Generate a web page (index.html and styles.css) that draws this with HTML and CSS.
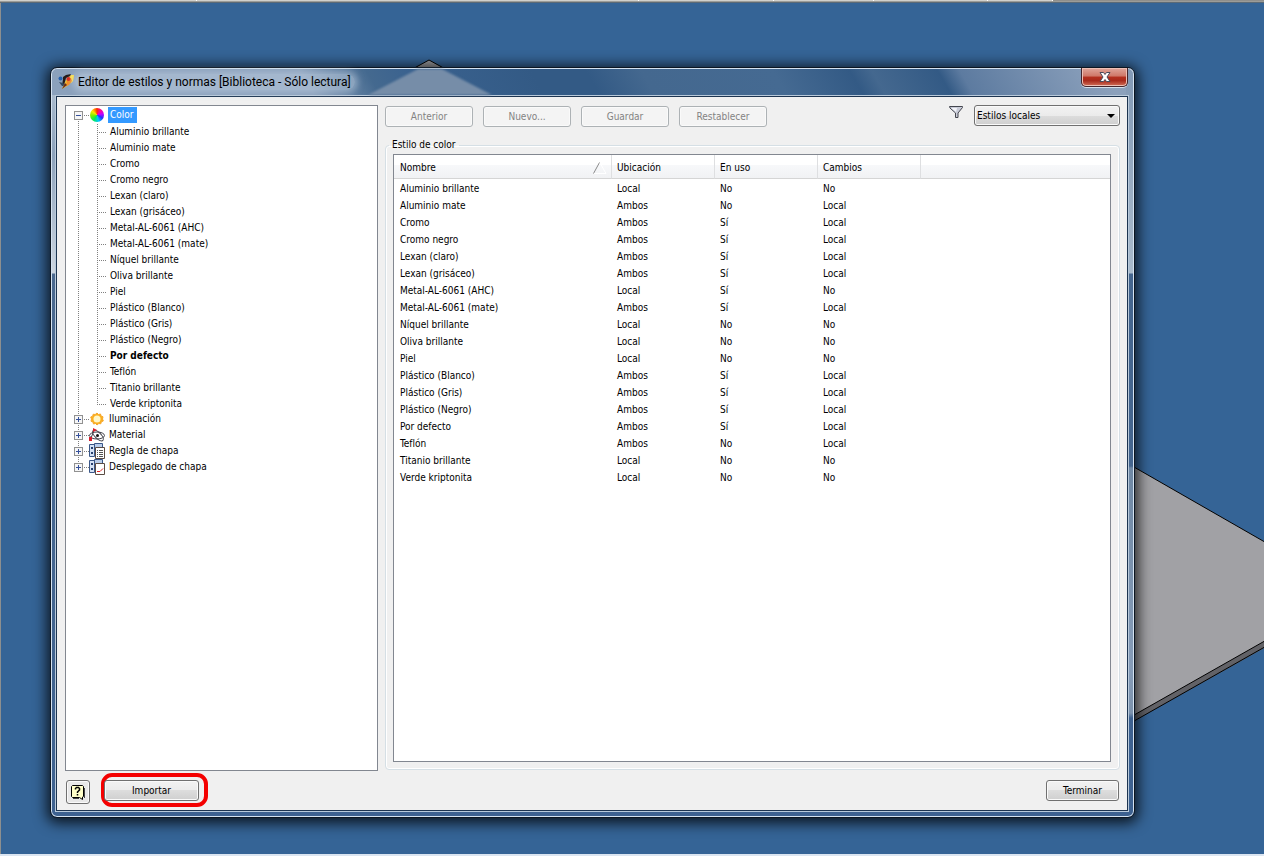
FILE: index.html
```html
<!DOCTYPE html>
<html lang="es">
<head>
<meta charset="utf-8">
<title>Editor de estilos y normas</title>
<link rel="stylesheet" href="styles.css">
</head>
<body>
<div class="topstrip"><i class="tab tab-a"></i><i class="tab tab-b"></i><i class="tab tab-f"></i><i class="tab tab-c"></i><i class="tab tab-d"></i><i class="tab tab-e"></i></div>
<main class="desktop">
  <svg class="scene" width="1264" height="852" viewBox="0 3 1264 852" aria-hidden="true">
    <path d="M429 60 L409 71 H449Z" fill="#999a9e" stroke="#000"/>
    <path d="M1120 459 L1270 545 V645 L1120 729Z" fill="#626267"/>
    <path d="M1120 459 L1270 545 V638 L1120 723Z" fill="#a1a1a5" stroke="#000"/>
    <path d="M1120 729 L1270 644" fill="none" stroke="#000"/>
  </svg>
  <section class="window" aria-label="Editor de estilos y normas">
    <header class="titlebar">
      <svg class="peak" width="140" height="26" viewBox="0 0 140 26" aria-hidden="true"><path d="M58 0H82L132 26H8Z" fill="#768da8"/></svg>
      <svg class="appicon" width="16" height="16" viewBox="0 0 16 16" aria-hidden="true">
        <path d="M4 15 L8 6 13 1 16 1 15 7 9 12Z" fill="#f3c22f"/>
        <path d="M13 1h3l-1 6-2 2-1-5z" fill="#ffe14a"/>
        <path d="M9 5l4-1 1 3-3 4-3 1z" fill="#f08a24"/>
        <path d="M5 3l3-2 5-1-1 2-4 2-2 7-2 1 1-7z" fill="#241a1a"/>
        <circle cx="2.500" cy="4.500" r="2" fill="#2361b0"/>
        <circle cx="10.500" cy="5" r="2" fill="#d8281e"/>
        <path d="M1 8l4 1 2 2-3 1z" fill="#34495f"/>
        <path d="M4 15l3-6 2 2z" fill="#6b2b18"/>
      </svg>
      <h1 class="title">Editor de estilos y normas [Biblioteca - Sólo lectura]</h1>
      <button class="close" type="button" aria-label="Cerrar">
        <svg width="12" height="10" viewBox="0 0 12 10" aria-hidden="true"><path d="M1 .5h3.500L6 2.500 7.500.5H11L8 5l3 4.500H7.500L6 7.500 4.500 9.500H1L4 5z" fill="#fff" stroke="#4a4a5a"/></svg>
      </button>
    </header>
    <div class="client">
      <div class="panes">
        <nav class="tree" aria-label="Estilos">
          <ul class="roots">
            <li class="root">
              <div class="node"><button class="toggle" type="button" aria-label="Contraer Color"></button><span class="dots"></span><span class="wheel"></span><a class="label selected" href="#">Color</a></div>
              <ul class="leaves">
                <li class="leaf">Aluminio brillante</li><li class="leaf">Aluminio mate</li><li class="leaf">Cromo</li><li class="leaf">Cromo negro</li><li class="leaf">Lexan (claro)</li><li class="leaf">Lexan (grisáceo)</li><li class="leaf">Metal-AL-6061 (AHC)</li><li class="leaf">Metal-AL-6061 (mate)</li><li class="leaf">Níquel brillante</li><li class="leaf">Oliva brillante</li><li class="leaf">Piel</li><li class="leaf">Plástico (Blanco)</li><li class="leaf">Plástico (Gris)</li><li class="leaf">Plástico (Negro)</li><li class="leaf current">Por defecto</li><li class="leaf">Teflón</li><li class="leaf">Titanio brillante</li><li class="leaf">Verde kriptonita</li>
              </ul>
            </li>
            <li class="root">
              <div class="node"><button class="toggle plus" type="button" aria-label="Expandir Iluminación"></button><span class="dots"></span>
                <svg class="icon" width="16" height="16" viewBox="0 0 16 16" aria-hidden="true"><path d="M8 2l1.500 1.500L11.500 3l.5 2 2 .8L13.500 8l.8 2-2 .8-.5 2-2-.3L8 14l-1.500-1.500-2 .5-.5-2-2-.8L2.500 8l-.8-2 2-.8.5-2 2 .3z" fill="#fbb01e" stroke="#f6a62a"/><circle cx="8" cy="8" r="3.500" fill="#fff6c8"/></svg>
                <a class="label" href="#">Iluminación</a></div>
            </li>
            <li class="root">
              <div class="node"><button class="toggle plus" type="button" aria-label="Expandir Material"></button><span class="dots"></span>
                <svg class="icon" width="16" height="16" viewBox="0 0 16 16" aria-hidden="true"><g fill="none" stroke="#44444c"><ellipse cx="8" cy="8.500" rx="7.500" ry="3.500"/><ellipse cx="9" cy="8.500" rx="7" ry="3" transform="rotate(45 9 8.500)"/><path d="M5 3.500L2 11"/></g><circle cx="8.500" cy="8.500" r="1.500" fill="#111"/><path d="M4 1l4 2-4 2zM0 10h3v4H0z" fill="#d81e2c"/></svg>
                <a class="label" href="#">Material</a></div>
            </li>
            <li class="root">
              <div class="node"><button class="toggle plus" type="button" aria-label="Expandir Regla de chapa"></button><span class="dots"></span>
                <svg class="icon" width="16" height="16" viewBox="0 0 16 16" aria-hidden="true"><path d="M.5 1.500h5v12h-5z" fill="#d5e2f5" stroke="#3a5788"/><path d="M2 4h2v2H2zM2 9h2v2H2z" fill="#26406e"/><path d="M5.500.5h8v11h-8z" fill="#b9cdea" stroke="#3a5788"/><path d="M6.500 4.500h9v11h-9z" fill="#fff" stroke="#5b4c44"/><path d="M8 7.500h1m1 0h4M8 9.500h1m1 0h4M8 11.500h1m1 0h4M8 13.500h1m1 0h4" stroke="#555"/></svg>
                <a class="label" href="#">Regla de chapa</a></div>
            </li>
            <li class="root">
              <div class="node"><button class="toggle plus" type="button" aria-label="Expandir Desplegado de chapa"></button><span class="dots"></span>
                <svg class="icon" width="16" height="16" viewBox="0 0 16 16" aria-hidden="true"><path d="M.5 1.500h5v12h-5z" fill="#d5e2f5" stroke="#3a5788"/><path d="M2 4h2v2H2zM2 9h2v2H2z" fill="#26406e"/><path d="M5.500.5h8v11h-8z" fill="#b9cdea" stroke="#3a5788"/><path d="M6.500 4.500h9v11h-9z" fill="#fff" stroke="#5b4c44"/><path d="M8 12.500h3l3-3" fill="none" stroke="#d22"/></svg>
                <a class="label" href="#">Desplegado de chapa</a></div>
            </li>
          </ul>
        </nav>
        <div class="detail">
          <div class="toolbar">
            <button class="btn" type="button" disabled>Anterior</button>
            <button class="btn" type="button" disabled>Nuevo...</button>
            <button class="btn" type="button" disabled>Guardar</button>
            <button class="btn" type="button" disabled>Restablecer</button>
            <svg class="funnel" width="16" height="16" viewBox="0 0 16 16" aria-hidden="true"><path d="M1.500 2.500h13v1L10 9v4.500H7.500V9L2 4z" fill="#c9ccd8" stroke="#44464f"/><path d="M3 4h6L8 8z" fill="#f4f5fa"/></svg>
            <span class="picker"><select class="combo" aria-label="Filtro de estilos"><option>Estilos locales</option></select></span>
          </div>
          <fieldset class="group">
            <legend class="legend">Estilo de color</legend>
            <div class="list">
              <table class="grid">
                <colgroup><col class="c-name"><col class="c-mid"><col class="c-mid"><col class="c-mid"><col></colgroup>
                <thead><tr><th><span class="sorted">Nombre<svg width="14" height="12" viewBox="0 0 14 12" aria-hidden="true"><path d="M.5 11.500L6.500.5" stroke="#8a8a8a"/><path d="M7 1l6 10.500H1" fill="none" stroke="#fff"/></svg></span></th><th>Ubicación</th><th>En uso</th><th>Cambios</th><th class="rest"></th></tr></thead>
                <tbody>
                  <tr><td>Aluminio brillante</td><td>Local</td><td>No</td><td>No</td><td></td></tr>
                  <tr><td>Aluminio mate</td><td>Ambos</td><td>No</td><td>Local</td><td></td></tr>
                  <tr><td>Cromo</td><td>Ambos</td><td>Sí</td><td>Local</td><td></td></tr>
                  <tr><td>Cromo negro</td><td>Ambos</td><td>Sí</td><td>Local</td><td></td></tr>
                  <tr><td>Lexan (claro)</td><td>Ambos</td><td>Sí</td><td>Local</td><td></td></tr>
                  <tr><td>Lexan (grisáceo)</td><td>Ambos</td><td>Sí</td><td>Local</td><td></td></tr>
                  <tr><td>Metal-AL-6061 (AHC)</td><td>Local</td><td>Sí</td><td>No</td><td></td></tr>
                  <tr><td>Metal-AL-6061 (mate)</td><td>Ambos</td><td>Sí</td><td>Local</td><td></td></tr>
                  <tr><td>Níquel brillante</td><td>Local</td><td>No</td><td>No</td><td></td></tr>
                  <tr><td>Oliva brillante</td><td>Local</td><td>No</td><td>No</td><td></td></tr>
                  <tr><td>Piel</td><td>Local</td><td>No</td><td>No</td><td></td></tr>
                  <tr><td>Plástico (Blanco)</td><td>Ambos</td><td>Sí</td><td>Local</td><td></td></tr>
                  <tr><td>Plástico (Gris)</td><td>Ambos</td><td>Sí</td><td>Local</td><td></td></tr>
                  <tr><td>Plástico (Negro)</td><td>Ambos</td><td>Sí</td><td>Local</td><td></td></tr>
                  <tr><td>Por defecto</td><td>Ambos</td><td>Sí</td><td>Local</td><td></td></tr>
                  <tr><td>Teflón</td><td>Ambos</td><td>No</td><td>Local</td><td></td></tr>
                  <tr><td>Titanio brillante</td><td>Local</td><td>No</td><td>No</td><td></td></tr>
                  <tr><td>Verde kriptonita</td><td>Local</td><td>No</td><td>No</td><td></td></tr>
                </tbody>
              </table>
            </div>
          </fieldset>
        </div>
      </div>
      <footer class="actions">
        <button class="btn help" type="button" aria-label="Ayuda">
          <svg width="16" height="16" viewBox="0 0 16 16" aria-hidden="true"><path d="M2.500 1.500h10l1 1v10l-1 .5v2.500L9.500 13.500h-7l-1-1v-10z" fill="#ffffc8" stroke="#000"/><path d="M14.500 4v10M3 14.500h6" stroke="#444"/><path d="M5.500 5.500V4.500l1-1h2l1 1v1.500L7.500 8v1M7.500 10v1.500" fill="none" stroke="#000" stroke-width="1.500"/></svg>
        </button>
        <span class="ring"><button class="btn import" type="button">Importar</button></span>
        <button class="btn finish" type="button">Terminar</button>
      </footer>
    </div>
  </section>
</main>
</body>
</html>
```

FILE: styles.css
```css
* { box-sizing: border-box; }

body {
  margin: 0;
  min-height: 100vh;
  display: flex;
  flex-direction: column;
  background: #356496;
  color: #000;
  font: 10px/16px "DejaVu Sans Condensed", Tahoma, sans-serif;
  border-bottom: 2px solid #dbe5f1;
}

ul { list-style: none; margin: 0; padding: 0; }
button, select { font: inherit; color: inherit; }
svg { display: block; flex: none; }

/* edge of the toolbar above the drawing area */
.topstrip {
  height: 3px;
  display: flex;
  background: linear-gradient(#d0d0cc 1px, #9c9c98 1px 2px, #5c6a76 2px);
}
.tab { height: 1px; border-right: 1px solid #fff; }
.tab-a { width: 197px; }
.tab-b { width: 442px; }
.tab-f { width: 135px; }
.tab-c { width: 100px; }
.tab-d { width: 114px; }
.tab-e { width: 65px; }
.topstrip::after { content: ""; flex: 1; height: 1px; background: #8f8f8c; }

.desktop {
  position: relative;
  flex: 1;
  display: flex;
  padding: 64px 129px 36px 49px;
  border-left: 1px solid #8d8f8f;
  overflow: hidden;
}
.scene { position: absolute; top: 0; left: -1px; }

.window {
  position: relative;
  flex: 1;
  min-width: 0;
  display: flex;
  flex-direction: column;
  padding: 0 5px 5px 4px;
  border: 1px solid #0c1622;
  border-radius: 7px;
  background:
    linear-gradient(#a9bacd 0, #8da2bb 60px, #cdd6e0 178px, #4a688e 179px, #3d6190 100%) 0 27px / 8px 100% no-repeat,
    linear-gradient(#8299b5 0, #a9bacb 205px, #44658e 206px, #44658e 398px, #6f88a4 400px, #869cb8 600px, #7c92ac 645px, #3d6190 650px) 100% 0 / 8px 100% no-repeat,
    linear-gradient(60deg, #8ba1bc 0, #8ba1bc 24%, #44698f 30%, #3a628f 34%, #335a85 45%, #335a85 50%, #44688f 55%, #456a92 67%, #335a85 74%, #44688f 76%, #335a85 82%, #5d7ba0 84%, #8ca1bc 97%) 0 0 / 100% 28px no-repeat,
    #3d6190;
  box-shadow: inset 0 0 0 1px #d4e2f0, 0 2px 14px 3px rgba(0,0,0,.8);
}

.titlebar { position: relative; display: flex; height: 27px; padding: 0 1px 0 3px; }
.titlebar > * { position: relative; }
/* drawing seen through the glass caption */
.titlebar .peak { position: absolute; left: 305px; top: 1px; filter: blur(1px); }
.appicon { margin-top: 6px; margin-right: 1px; }
.title {
  margin: 6px 0 5px;
  padding: 0 4px 0 3px;
  border-radius: 8px;
  white-space: nowrap;
  font: 12px/16px "Segoe UI", Roboto, sans-serif;
  background: rgba(190,206,223,.5);
  box-shadow: 0 0 6px 3px rgba(190,206,223,.5);
}
.close {
  margin-left: auto;
  width: 47px;
  height: 19px;
  padding: 0;
  display: grid;
  place-items: center;
  border: 1px solid #44252c;
  border-top: 0;
  border-radius: 0 0 5px 5px;
  background: linear-gradient(#e0a69b, #cf7768 45%, #b5301f 50%, #a82a1c 70%, #d2705a);
  box-shadow: inset 0 0 0 1px #edc0b6, 0 1px 0 #d4dfea;
}

.client {
  flex: 1;
  display: flex;
  flex-direction: column;
  padding: 9px 8px 7px 9px;
  border: 1px solid #b9cadb;
  background: #f0f0f0;
  box-shadow: inset 0 0 0 1px #1d3450;
}
.panes { flex: 1; display: grid; grid-template-columns: 313px 1fr; gap: 7px; }

.tree { padding: 1px 0 0 8px; border: 1px solid #828790; background: #fff; }
.root { background: repeating-linear-gradient(#808080 0 1px, transparent 1px 2px) 4px 0 / 1px 100% no-repeat; }
.root:first-child { background-position: 4px 10px; }
.root:last-child { background-size: 1px 8px; }
.node { display: flex; align-items: center; height: 16px; }
.toggle {
  width: 9px;
  height: 9px;
  padding: 0;
  border: 1px solid #919191;
  background: linear-gradient(#35509a, #35509a) center / 5px 1px no-repeat, #f6f6f6;
}
.plus {
  background:
    linear-gradient(#35509a, #35509a) center / 5px 1px no-repeat,
    linear-gradient(#35509a, #35509a) center / 1px 5px no-repeat,
    #f6f6f6;
}
.dots { width: 6px; height: 1px; background: repeating-linear-gradient(90deg, transparent 0 1px, #808080 1px 2px); }
.icon { width: 16px; height: 16px; }
.wheel {
  width: 14px;
  height: 14px;
  margin: 0 1px;
  border-radius: 50%;
  background: conic-gradient(#ff2a00, #ff00a0 40deg, #c000ff 80deg, #2030ff 120deg, #00c8ff 165deg, #00e860 210deg, #70f000 260deg, #ffe800 310deg, #ff2a00);
}
.label { margin-left: 3px; padding: 0 1px; color: #000; text-decoration: none; }
.selected { padding: 0 3px 0 2px; background: #3399ff; color: #fff; }
.leaves { padding: 1px 0 0 23px; margin-bottom: -1px; }
.leaf {
  height: 16px;
  padding-left: 13px;
  background:
    repeating-linear-gradient(90deg, #808080 0 1px, transparent 1px 2px) 0 8px / 10px 1px no-repeat,
    repeating-linear-gradient(#808080 0 1px, transparent 1px 2px) 0 0 / 1px 100% no-repeat;
}
.leaf:last-child { background-size: 10px 1px, 1px 8px; }
.current { font-weight: bold; }

.detail { display: flex; flex-direction: column; min-width: 0; }
.toolbar { display: flex; gap: 10px; padding-top: 1px; }
.btn {
  width: 88px;
  height: 21px;
  padding: 0;
  border: 1px solid #707070;
  border-radius: 3px;
  background: linear-gradient(#f2f2f2, #ebebeb 50%, #dddddd 50%, #cfcfcf);
  box-shadow: inset 0 0 0 1px #fafafa;
  line-height: 18px;
  text-align: center;
}
.btn:disabled { border-color: #adb2b5; background: #f4f4f4; color: #838383; }
.funnel { margin-left: auto; margin-top: -2px; }
.picker { position: relative; display: block; width: 146px; height: 21px; margin-top: -1px; }
.picker::after {
  content: "";
  position: absolute;
  top: 9px;
  right: 5px;
  border: 4px solid transparent;
  border-top-color: #000;
  border-bottom: 0;
  pointer-events: none;
}
.combo {
  appearance: none;
  width: 100%;
  height: 21px;
  padding: 0 2px;
  border: 1px solid #707070;
  border-radius: 3px;
  background: linear-gradient(#f2f2f2, #ebebeb 50%, #dddddd 50%, #cfcfcf);
  box-shadow: inset 0 0 0 1px #fafafa;
}

.group {
  flex: 1;
  display: flex;
  min-width: 0;
  margin: 10px 0 1px;
  padding: 1px 8px 7px 7px;
  border: 1px solid #d5dfe5;
  border-radius: 4px;
  box-shadow: inset 0 0 0 1px #fff;
}
.legend { margin-left: -4px; padding: 0 3px; }
.list { flex: 1; border: 1px solid #828790; background: #fff; }
.grid { width: 100%; table-layout: fixed; border-spacing: 0; }
.c-name { width: 218px; }
.c-mid { width: 103px; }
.grid th, .grid td { padding: 0 0 0 5px; text-align: left; font-weight: normal; }
.grid th:first-child, .grid td:first-child { padding-left: 6px; }
.grid td { height: 17px; line-height: 17px; }
.grid th {
  height: 24px;
  padding-top: 2px;
  border-right: 1px solid #dedfe1;
  border-bottom: 1px solid #d5d5d5;
  background: linear-gradient(#fff 45%, #f7f8fa 45%, #f1f2f4);
}
.grid .rest { border-right: 0; }
.grid tbody::before { content: ""; display: table-row; height: 1px; }
.sorted { display: flex; align-items: center; justify-content: space-between; padding-right: 4px; }

.actions { display: flex; align-items: flex-start; padding: 9px 1px 0; }
.help { width: 24px; height: 24px; display: grid; place-items: center; background: #e8e8e8; }
/* highlight drawn around the import button */
.ring {
  margin: -7px 0 -5px 11px;
  padding: 3px 5px 2px 0;
  border: 4px solid #f40000;
  border-radius: 11px;
}
.import { display: block; width: 95px; margin-left: -1px; }
.finish { width: 73px; margin-left: auto; }
```
